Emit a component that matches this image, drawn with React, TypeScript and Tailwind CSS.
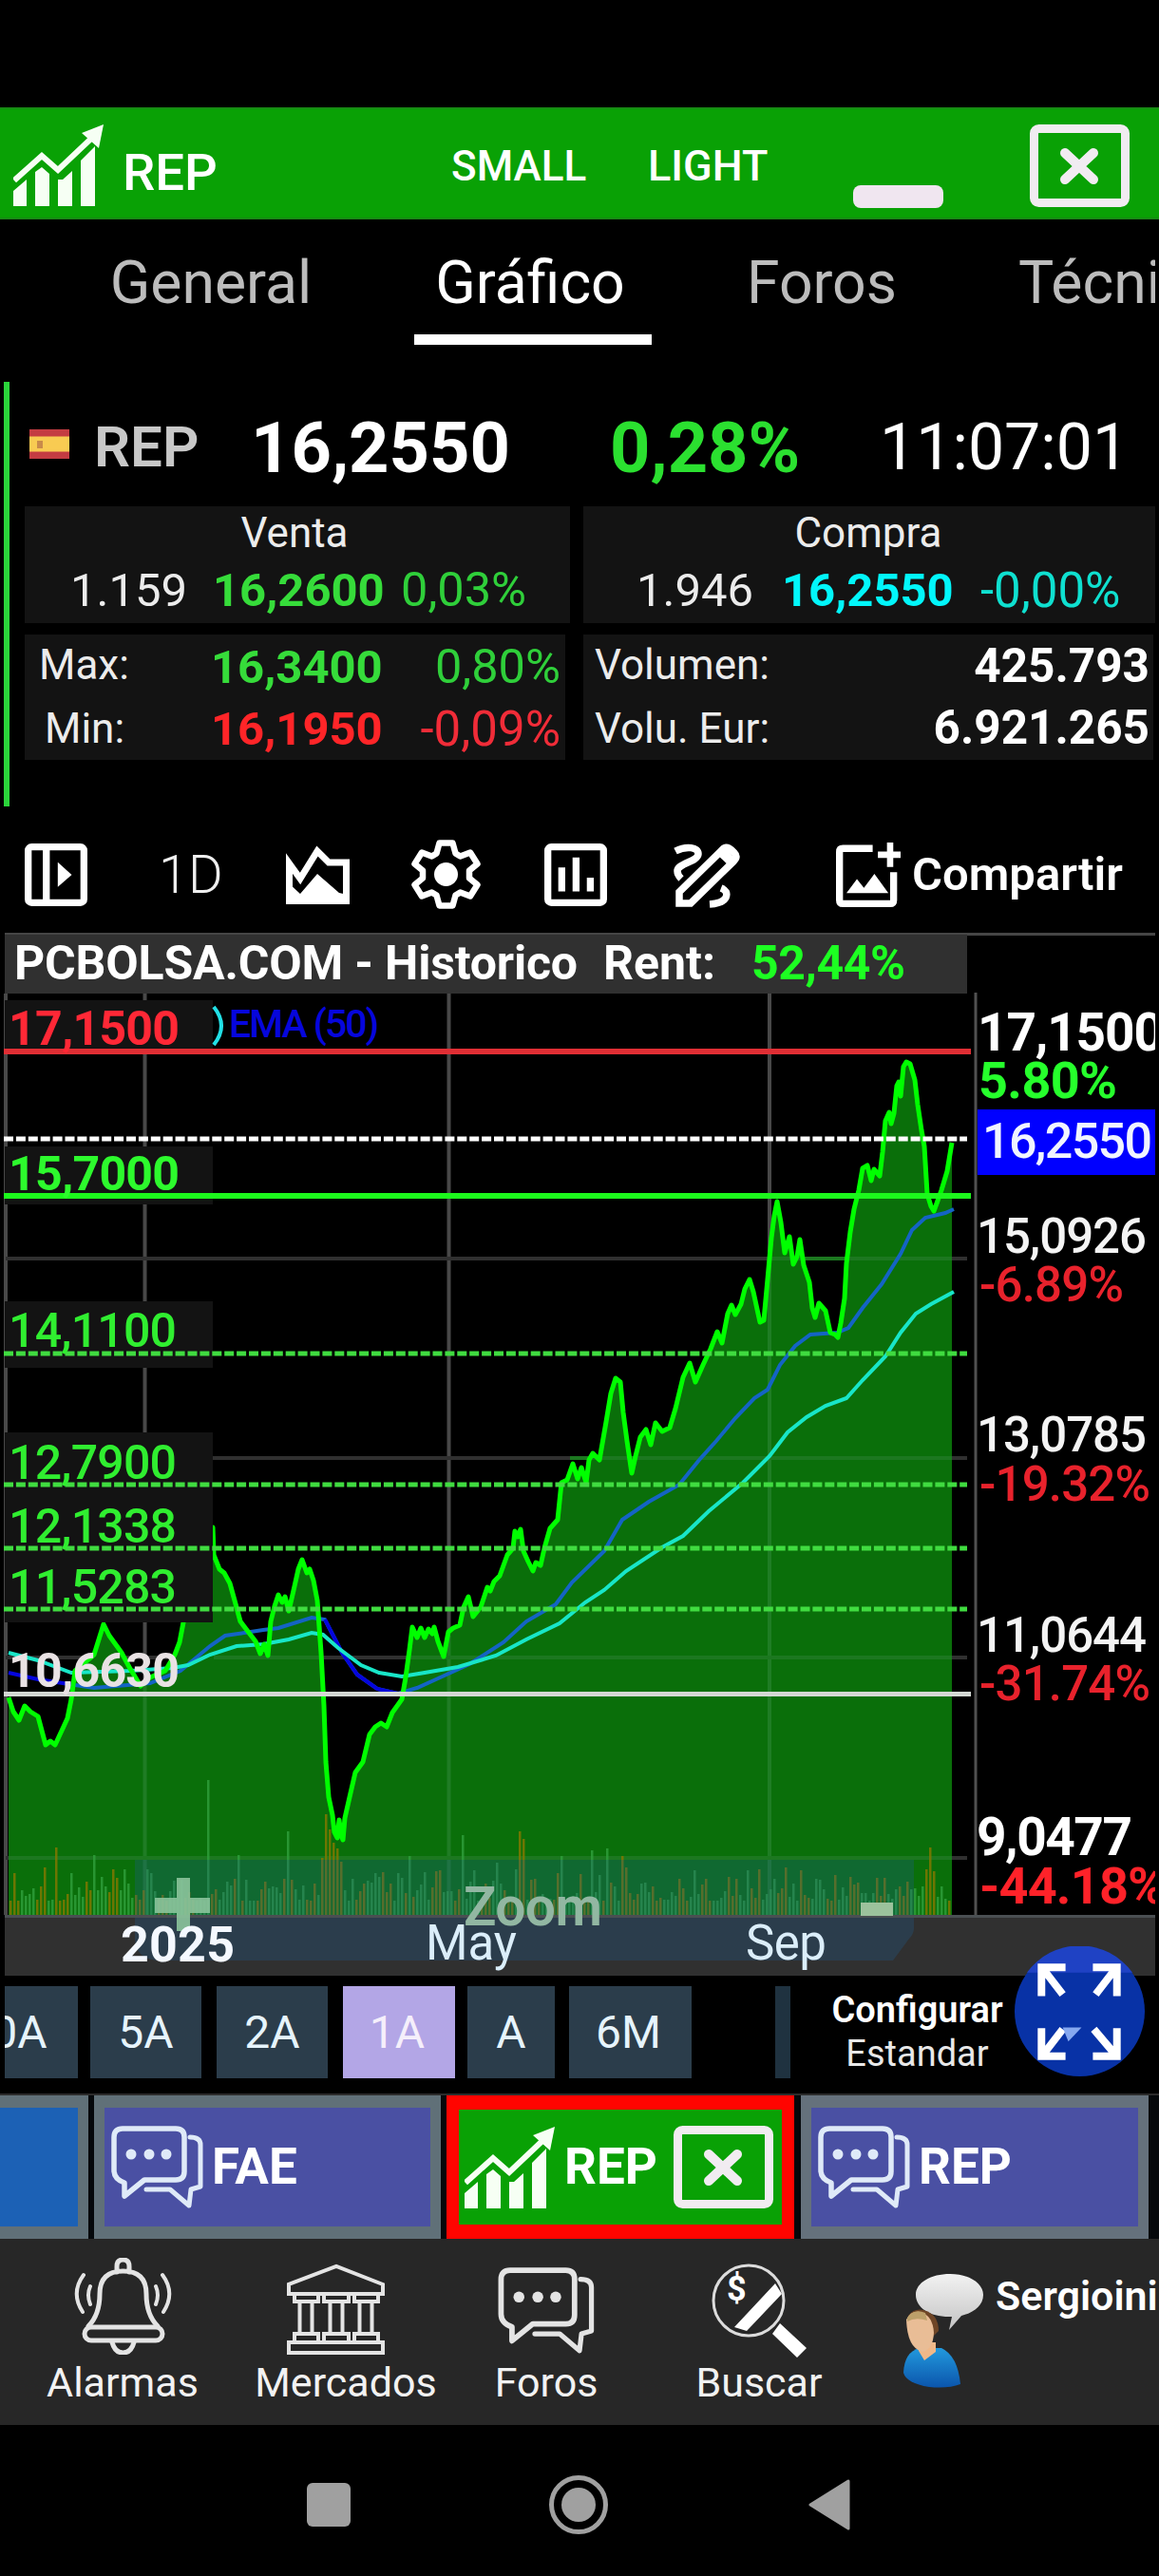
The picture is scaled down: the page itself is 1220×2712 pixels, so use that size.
import type { ReactNode } from "react";

// Chart coordinates: x in px, y measured from the top of the screen
const PRICE =
  "9,1787 14,1802 20,1811 26,1796 32,1802 40,1807 44,1822 48,1837 53,1833 58,1837 65,1822 71,1809 75,1789 79,1759 99,1742 104,1726 109,1710 115,1722 123,1733 128,1740 136,1755 148,1775 158,1766 174,1759 184,1742 189,1729 193,1708 205,1660 215,1630 224,1608 225,1637 231,1652 236,1656 242,1667 247,1685 253,1707 259,1715 269,1728 274,1741 278,1731 282,1743 285,1707 289,1691 293,1679 297,1687 300,1681 304,1696 310,1670 314,1652 318,1642 323,1656 326,1652 330,1664 334,1685 338,1740 341,1796 343,1855 346,1892 350,1911 352,1929 355,1935 357,1916 359,1932 361,1937 363,1914 368,1892 374,1866 382,1855 389,1826 395,1818 401,1814 407,1818 413,1803 423,1789 427,1766 431,1737 434,1713 439,1724 443,1714 447,1724 451,1715 455,1720 457,1713 461,1728 467,1744 472,1718 477,1714 484,1711 488,1692 493,1681 498,1702 506,1692 513,1671 516,1675 520,1665 526,1659 534,1637 540,1630 542,1612 545,1618 548,1610 551,1633 556,1644 561,1654 564,1645 569,1648 573,1630 579,1609 587,1600 591,1561 597,1558 603,1541 608,1557 612,1545 617,1561 620,1537 624,1530 631,1537 638,1497 643,1467 648,1451 653,1455 656,1487 660,1517 665,1551 669,1533 674,1513 680,1505 685,1521 690,1498 697,1507 705,1503 711,1483 719,1450 726,1435 732,1455 740,1437 748,1420 755,1402 760,1414 766,1383 770,1374 774,1384 780,1373 784,1357 789,1347 793,1360 798,1383 800,1392 804,1390 808,1347 812,1303 815,1280 818,1265 822,1287 826,1319 831,1302 835,1331 839,1323 842,1305 846,1332 852,1350 855,1377 858,1387 862,1372 869,1380 874,1403 879,1405 882,1408 885,1393 889,1367 891,1330 895,1297 899,1273 904,1253 908,1230 913,1227 917,1243 920,1231 926,1238 929,1213 932,1180 936,1171 938,1183 941,1172 944,1143 946,1139 948,1154 951,1123 954,1118 958,1120 963,1137 966,1163 970,1190 973,1207 976,1257 980,1270 983,1275 986,1267 991,1253 997,1233 1002,1203";

const EMA_50 =
  "79,1774 99,1777 158,1772 190,1759 221,1733 237,1722 277,1716 293,1714 328,1703 342,1705 360,1740 376,1763 397,1778 419,1783 439,1777 459,1768 494,1752 530,1729 554,1707 585,1689 602,1666 636,1633 655,1600 683,1581 715,1563 736,1537 754,1517 774,1493 794,1472 808,1463 821,1437 837,1417 853,1405 881,1403 893,1398 908,1377 928,1352 948,1320 960,1295 974,1282 995,1277 1004,1273";

const EMA_200 =
  "9,1740 40,1748 75,1761 138,1759 182,1756 198,1753 221,1742 249,1733 277,1731 304,1726 328,1719 340,1721 356,1735 380,1753 399,1761 423,1765 447,1761 482,1755 522,1743 554,1726 589,1709 616,1687 636,1674 659,1654 697,1629 719,1617 746,1591 782,1561 810,1533 829,1508 849,1492 869,1480 891,1472 908,1453 932,1428 948,1403 964,1383 980,1373 1004,1360";

const SPIKES: Record<number, number> = {
  46: 50, 58: 71, 98: 63, 118: 48, 218: 142, 250: 63, 302: 88, 338: 60, 342: 106, 346: 90, 350: 76, 354: 70,
  358: 56, 430: 62, 486: 84, 522: 55, 546: 88, 550: 80, 590: 62, 622: 68, 638: 70, 654: 62, 658: 50, 798: 48,
  826: 50, 894: 40, 974: 48, 978: 71, 982: 46,
};

// spikes that closed up are drawn green
const UP_SPIKES = [98, 218, 250, 302, 430, 486, 522, 590, 622, 638];

const VOLUMES = Array.from({ length: 248 }, (_, i) => {
  const x = 10 + i * 4;
  const noise = Math.abs(Math.sin(i * 12.9898) * 43758.5453) % 1;
  const down = SPIKES[x] ? !UP_SPIKES.includes(x) : (i * 7919) % 13 < 6;
  return { x, h: SPIKES[x] ?? 15 + Math.round(noise * noise * 34), down };
});

const LEVELS = [
  { label: "14,1100", y: 1425, base: 1418 },
  { label: "12,7900", y: 1563, base: 1557 },
  { label: "12,1338", y: 1630, base: 1624 },
  { label: "11,5283", y: 1694, base: 1688 },
];

const AXIS = [
  { label: "15,0926", y: 1319, pct: "-6.89%", pctY: 1370, w: 149 },
  { label: "13,0785", y: 1528, pct: "-19.32%", pctY: 1580, w: 177 },
  { label: "11,0644", y: 1739, pct: "-31.74%", pctY: 1790, w: 177 },
];

function ChartIcon({ className = "" }: { className?: string }) {
  return (
    <svg viewBox="0 0 96 86" className={`h-[86px] w-[96px] shrink-0 ${className}`} fill="#f6fff4">
      <path d="M0 70 14 58V86H0ZM23 50 30 45 38 52V86H23ZM47 58 52 58 62 49V86H47ZM71 38 86 23V86H71Z" />
      <path d="M1 59 30 33 47 48 85 12" fill="none" stroke="#f6fff4" strokeWidth="6" />
      <path d="M95 0 90 25 72 9Z" />
    </svg>
  );
}

function CloseIcon() {
  return (
    <svg viewBox="0 0 105 87" className="h-[87px] w-[105px] shrink-0" fill="none" stroke="#f1ecf1">
      <rect x="4.500" y="4.500" width="96" height="78" rx="5" strokeWidth="9" />
      <path d="M37 30 67 58M67 30 37 58" strokeWidth="10" strokeLinecap="round" />
    </svg>
  );
}

function ChatIcon({ className = "", color = "#dfeaf8" }: { className?: string; color?: string }) {
  return (
    <svg viewBox="0 0 97 88" className={`shrink-0 ${className}`} fill="none" stroke={color} strokeWidth="5.500" strokeLinejoin="round" strokeLinecap="round">
      <path d="M12 3H68Q77 3 77 12V48Q77 57 68 57H35L14 74V60Q3 56 3 47V12Q3 3 12 3Z" />
      <path d="M83 12Q94 12 94 20V64L84 67 82 84 62 67H37" strokeWidth="5" />
      <g fill={color} stroke="none">
        <circle cx="21" cy="30" r="5.500" />
        <circle cx="40" cy="30" r="5.500" />
        <circle cx="58" cy="30" r="5.500" />
      </g>
    </svg>
  );
}

function Header() {
  return (
    <header className="flex h-[118px] shrink-0 items-center border-y-2 border-[#178a14] bg-[#09a105] pl-[14px] pt-1 font-medium text-white">
      <ChartIcon />
      <span className="mt-[14px] ml-[19px] w-[346px] text-[54.500px] leading-none">REP</span>
      <span className="mt-[2px] w-[207px] text-[44px] leading-none">SMALL</span>
      <span className="w-[216px] text-[45px] leading-none">LIGHT</span>
      <span className="mt-[66px] h-[24px] w-[95px] shrink-0 rounded-[8px] bg-[#f0e6f0]" />
      <span className="ml-[91px]">
        <CloseIcon />
      </span>
    </header>
  );
}

function SectionTabs() {
  return (
    <nav className="flex h-[132px] w-[1216px] shrink-0 overflow-hidden text-[62.500px] text-[#bcbcbc]">
      <span className="ml-[86px] flex w-[272px] shrink-0 items-center justify-center pt-px">General</span>
      <span className="ml-[78px] flex w-[250px] shrink-0 items-center justify-center border-b-[11px] border-white pt-[12px] pr-[6px] text-white">Gráfico</span>
      <span className="ml-[54px] flex w-[250px] shrink-0 items-center justify-center pt-px">Foros</span>
      <span className="ml-[82px] flex shrink-0 items-center pt-px">Técnico</span>
    </nav>
  );
}

function Panel({ className, children }: { className: string; children: ReactNode }) {
  return <div className={`flex shrink-0 flex-col bg-[#131313] pt-[2px] text-[#ececec] ${className}`}>{children}</div>;
}

function Quote() {
  return (
    <section className="mt-[39px] flex h-[447px] shrink-0 pl-[4px]">
      <div className="w-[6px] shrink-0 bg-[#2bd43b]" />
      <div className="ml-[16px] flex flex-col">
        <div className="flex h-[131px] items-center leading-none">
          <svg viewBox="0 0 42 31" className="ml-[5px] h-[31px] w-[42px]">
            <rect width="42" height="31" fill="#c43c42" />
            <rect y="7.500" width="42" height="16" fill="#f8cb52" />
            <rect x="8" y="12" width="6" height="8" fill="#c98a4a" />
          </svg>
          <span className="mt-[6px] ml-[26px] w-[165px] text-[60px] font-semibold text-[#c8c8c8]">REP</span>
          <span className="mt-[8px] w-[378px] text-[74px] font-bold text-white">16,2550</span>
          <span className="mt-[8px] w-[284px] text-[74px] font-bold text-[#2be030]">0,28%</span>
          <span className="mt-[7px] text-[68px] text-white">11:07:01</span>
        </div>

        <div className="flex gap-[14px] leading-none">
          <Panel className="h-[123px] w-[574px]">
            <div className="flex h-[52px] items-center justify-center pr-[6px] text-[44px]">Venta</div>
            <div className="flex h-[71px] items-center pl-[48px] text-[49px]">
              <span className="w-[150px]">1.159</span>
              <span className="w-[198px] font-bold text-[#36dc3a]">16,2600</span>
              <span className="text-[50.500px] text-[#2fcf3a]">0,03%</span>
            </div>
          </Panel>
          <Panel className="h-[123px] w-[602px]">
            <div className="flex h-[52px] items-center justify-center pr-[2px] text-[44px]">Compra</div>
            <div className="flex h-[71px] items-center pl-[56px] text-[49px]">
              <span className="w-[153px]">1.946</span>
              <span className="w-[209px] font-bold text-[#02f6fa]">16,2550</span>
              <span className="text-[51px] text-[#0fe0d0]">-0,00%</span>
            </div>
          </Panel>
        </div>

        <div className="mt-[12px] flex gap-[19px] leading-none">
          <Panel className="h-[132px] w-[569px] text-[49px]">
            <div className="flex h-[65px] items-center pl-[15px]">
              <span className="mb-[4px] w-[181px] text-[44px]">Max:</span>
              <span className="w-[175px] font-bold text-[#36dc3a]">16,3400</span>
              <span className="flex-1 pr-[5px] text-right text-[50.500px] text-[#2fcf3a]">0,80%</span>
            </div>
            <div className="flex h-[67px] items-center pl-[21px]">
              <span className="w-[175px] text-[44px]">Min:</span>
              <span className="w-[175px] font-bold text-[#ff2528]">16,1950</span>
              <span className="flex-1 pr-[5px] text-right text-[51px] text-[#f02c38]">-0,09%</span>
            </div>
          </Panel>
          <Panel className="h-[132px] w-[600px] pr-[4px] pl-[12px] text-[44px]">
            <div className="flex h-[65px] items-center justify-between">
              <span className="mb-[4px]">Volumen:</span>
              <span className="text-[49.500px] font-bold text-white">425.793</span>
            </div>
            <div className="flex h-[67px] items-center justify-between">
              <span>Volu. Eur:</span>
              <span className="text-[49.500px] font-bold text-white">6.921.265</span>
            </div>
          </Panel>
        </div>
      </div>
    </section>
  );
}

function Toolbar() {
  return (
    <div className="flex h-[133px] shrink-0 items-center pt-[10px] pl-[26px] leading-none text-white">
      <svg viewBox="3 3 18 18" className="size-[66px]" fill="none" stroke="currentColor" strokeWidth="2">
        <rect x="4" y="4" width="16" height="16" rx="1" />
        <path d="M9.200 4V20" />
        <path d="M12.500 8.400 16.500 12 12.500 15.500Z" fill="currentColor" stroke="none" />
      </svg>
      <span className="ml-[75px] w-[134px] text-[56px] font-light text-[#f0f0f0]">1D</span>
      <svg viewBox="0 0 67 63" className="h-[63px] w-[67px]" fill="none" stroke="currentColor" strokeWidth="7">
        <path d="M3.500 60V20L15 36 33 7 45 19H63.500V60Z" />
        <path d="M2 40 15 52 33 31 56 51 65 53V62H2Z" fill="currentColor" stroke="none" />
      </svg>
      <svg viewBox="0 0 73 73" className="ml-[65px] size-[73px]" fill="none" stroke="currentColor" strokeWidth="6.500" strokeLinejoin="round">
        <path d="M29.500 3.500H43.500L46.500 14.500 51.500 17.500 62 13.500 69.500 25.500 61 32.500V40.500L69.500 47.500 62 59.500 51.500 55.500 46.500 58.500 43.500 69.500H29.500L26.500 58.500 21.500 55.500 11 59.500 3.500 47.500 12 40.500V32.500L3.500 25.500 11 13.500 21.500 17.500 26.500 14.500Z" />
        <circle cx="36.500" cy="36.500" r="12.500" fill="currentColor" stroke="none" />
      </svg>
      <svg viewBox="3 3 18 18" className="ml-[67px] size-[66px]" fill="none" stroke="currentColor" strokeWidth="2">
        <rect x="4" y="4" width="16" height="16" rx="1" />
        <path d="M8 9.900V16.800M12.100 7V16.800M16.200 12.800V16.800" />
      </svg>
      <svg viewBox="0 0 70 72" className="ml-[70px] h-[72px] w-[70px]" fill="none" stroke="currentColor" strokeWidth="7.500">
        <path d="M2 11C14 5 26 7 26 14C26 22 4 24 4 32Q4 36 8 40" />
        <path d="M6 66V54L50 11Q55 4 61 10L64 13Q68 17 63 22L18 66Z" />
        <path d="M45 14 60 28 65 20 55 7Z" fill="currentColor" stroke="none" />
        <path d="M50 50Q58 53 55 60Q52 66 38 67" />
      </svg>
      <svg viewBox="3 2.500 18.500 18.500" className="ml-[101px] size-[68px]" fill="none" stroke="currentColor" strokeWidth="2">
        <path d="M13.500 4.200H5Q4 4.200 4 5.200V19Q4 20 5 20H18.500Q19.500 20 19.500 19V11" />
        <path d="M18.500 2.500V9.500M15 6H22" strokeWidth="1.800" />
        <path d="M6 17 9 13 11 15.500 14 11.500 18 17Z" fill="currentColor" stroke="none" />
      </svg>
      <span className="ml-[12px] text-[49px] font-semibold">Compartir</span>
    </div>
  );
}

function Chart() {
  return (
    <svg viewBox="0 982 1220 1098" className="h-[1098px] w-[1220px] shrink-0" fontFamily="Roboto, sans-serif">
      {/* title strip */}
      <rect x="5" y="982" width="1211" height="3" fill="#464646" />
      <rect x="5" y="984" width="1013" height="62" fill="#303030" />
      <g fontWeight="700" fontSize="50">
        <text x="15" y="1031" textLength="593" fill="#fff">PCBOLSA.COM - Historico</text>
        <text x="635" y="1031" textLength="118" fill="#fff">Rent:</text>
        <text x="791" y="1031" textLength="162" fill="#1dff22">52,44%</text>
      </g>

      {/* grid */}
      <path d="M6 1046V2016M152.500 1046V2016M472.500 1046V2016M810 1046V2016" stroke="#484848" strokeWidth="4" />
      <path d="M6 1325H1018M6 1535H1018M6 1745H1018M6 1956H1018" stroke="#303030" strokeWidth="4" />
      <path d="M1027 1045V2016" stroke="#505050" strokeWidth="3" />

      <polygon points={`9,2016 ${PRICE} 1002,2016`} fill="#0a6f0a" />
      <path d="M152.500 1775V2016M472.500 1722V2016M810 1320V2016" stroke="#1f7d24" strokeWidth="4" />
      <path d="M225 1745H338M428 1745H1002M9 1956H1002M600 1535H1002M810 1325H1002" stroke="#1c7820" strokeWidth="4" />
      <polyline points={EMA_50} fill="none" stroke="#1464c4" strokeWidth="4" />
      <path d="M9 1761 40 1768 79 1774M342 1705 360 1740 376 1763 397 1778 419 1783" fill="none" stroke="#0505dc" strokeWidth="4" />
      <polyline points={EMA_200} fill="none" stroke="#18e6c8" strokeWidth="4" />
      <polyline points={PRICE} fill="none" stroke="#00ff00" strokeWidth="5" strokeLinejoin="round" />

      {VOLUMES.map(({ x, h, down }) => (
        <rect key={x} x={x} y={2016 - h} width="2.500" height={h} fill={down ? "#867800" : "#2fa03c"} opacity="0.8" />
      ))}

      {/* price level tags */}
      <path d="M5 1053H224V1107H5ZM5 1207H224V1268H5ZM5 1370H224V1440H5ZM5 1508H224V1708H5Z" fill="#131313" />
      <path d="M4 1107H1022" stroke="#e02e34" strokeWidth="6" />
      <path d="M4 1199H1018" stroke="#fff" strokeWidth="5" strokeDasharray="10 2.900" />
      <path d="M4 1259H1022" stroke="#1cf81c" strokeWidth="6" />
      {LEVELS.map(({ label, y, base }) => (
        <g key={label}>
          <path d={`M4 ${y}H1018`} stroke="#40dc40" strokeWidth="5" strokeDasharray="10 2.900" />
          <text x="9" y={base} fontSize="50" fontWeight="500" textLength="177" fill="#30ee30">{label}</text>
        </g>
      ))}
      <path d="M4 1783.500H1022" stroke="#d4d8d4" strokeWidth="5" />
      <g fontSize="50" fontWeight="700">
        <text x="9" y="1100" textLength="180" fill="#ff2836">17,1500</text>
        <text x="9" y="1253" textLength="180" fill="#2dfa2d">15,7000</text>
        <text x="9" y="1776" textLength="180" fill="#e9e2e4">10,6630</text>
      </g>
      <path d="M225 1060Q241 1080 225 1100" fill="none" stroke="#22e0e6" strokeWidth="4" />
      <text x="241" y="1092" fontSize="41" fontWeight="500" textLength="158" fill="#0606dc">EMA (50)</text>

      {/* zoom control */}
      <path d="M142 1958H962V2030Q962 2036 957 2041L940 2064H170Q142 2064 142 2040Z" fill="#215d8f" opacity="0.3" />
      <rect x="5" y="2016" width="1211" height="64" fill="#303030" />
      <path d="M142 2016H962V2030Q962 2036 957 2041L940 2064H170Q142 2064 142 2040Z" fill="#215d8f" opacity="0.3" />
      <rect x="5" y="2016" width="1211" height="3" fill="#4a4f52" />
      <path d="M186 1977H200V1998H221V2014H200V2033H186V2014H163V1998H186Z" fill="#8cc49c" opacity="0.9" />
      <path d="M906 2003H940V2017H906Z" fill="#9cc29c" />
      <text x="488" y="2027" fontSize="57" fontWeight="600" textLength="146" fill="#92b7a2">Zoom</text>
      <text x="127" y="2065" fontSize="52" fontWeight="700" textLength="120" fill="#f4f8ff">2025</text>
      <g fontSize="51" fill="#dbeefa">
        <text x="448" y="2063" textLength="96">May</text>
        <text x="785" y="2063" textLength="85">Sep</text>
      </g>

      {/* price axis */}
      <g fontSize="55" fontWeight="700">
        <text x="1029" y="1106" textLength="196" fill="#fff">17,1500</text>
        <text x="1030" y="1156" fontSize="54" textLength="146" fill="#26ff2c">5.80%</text>
        <text x="1028" y="1953" textLength="164" fill="#fff">9,0477</text>
        <text x="1031" y="2004" fontSize="54" textLength="196" fill="#ff2229">-44.18%</text>
      </g>
      <rect x="1029" y="1168" width="187" height="69" fill="#0000ff" />
      <text x="1034" y="1219" fontSize="52" fontWeight="500" textLength="179" fill="#f0f4ff">16,2550</text>
      {AXIS.map(({ label, y, pct, pctY, w }) => (
        <g key={label} fontSize="51">
          <text x="1028" y={y} fontWeight="500" textLength="179" fill="#f4f4f4">{label}</text>
          <text x="1031" y={pctY} fontWeight="500" textLength={w + 3} fill="#e8222c">{pct}</text>
        </g>
      ))}
      <rect x="1216" y="982" width="4" height="1098" fill="#000" />
    </svg>
  );
}

function RangeButton({ className, children }: { className: string; children?: ReactNode }) {
  return <span className={`flex h-[97px] shrink-0 items-center justify-center overflow-hidden text-[48px] ${className}`}>{children}</span>;
}

function Ranges() {
  return (
    <div className="relative flex h-[124px] shrink-0 pt-[11px] pl-[5px] leading-none text-[#e6f4fc]">
      <RangeButton className="w-[77px] bg-[#2b3d4b] pr-[73px]">10A</RangeButton>
      <RangeButton className="ml-[13px] w-[117px] bg-[#2b3d4b]">5A</RangeButton>
      <RangeButton className="ml-[16px] w-[117px] bg-[#2b3d4b]">2A</RangeButton>
      <RangeButton className="ml-[16px] w-[118px] bg-[#b3a6e6] pr-[4px] text-[#f5effb]">1A</RangeButton>
      <RangeButton className="ml-[13px] w-[92px] bg-[#2b3d4b]">A</RangeButton>
      <RangeButton className="ml-[15px] w-[129px] bg-[#2b3d4b] pr-[4px]">6M</RangeButton>
      <RangeButton className="ml-[88px] w-[16px] bg-[#1f3240]" />
      <div className="ml-[36px] flex w-[195px] flex-col items-center pt-[2px] text-[38px] text-white">
        <span className="flex h-[46px] items-center font-semibold">Configurar</span>
        <span className="flex h-[46px] items-center text-[#e8e8e8]">Estandar</span>
      </div>
      {/* floating fullscreen button */}
      <svg viewBox="0 0 138 138" className="absolute top-[-31px] left-[1068px] size-[137px]" fill="none" stroke="#fff" strokeWidth="8">
        <circle cx="69" cy="69" r="69" fill="#0832a6" stroke="none" />
        <path d="M13 28A69 69 0 0 1 125 28Z" fill="#1f42c4" stroke="none" />
        <path d="M54 22.500H28.500V53M31 25 51 51M83 22.500H108.500V53M106 25 86 51" />
        <path d="M54 116.500H28.500V87M31 114 51 88M83 116.500H108.500V87M106 114 84 88" />
        <path d="M51 86H71L57 101Z" fill="#86a8f0" stroke="none" />
      </svg>
    </div>
  );
}

function OpenTabs() {
  return (
    <div className="flex h-[153px] shrink-0 overflow-hidden border-t-2 border-[#2c2c2c] bg-[#05080b] text-[53px] leading-none font-bold text-white">
      <div className="h-[151px] w-[93px] shrink-0 border-y-[13px] border-r-[11px] border-[#607078] bg-[#1c61b5]" />
      <div className="ml-[6px] flex w-[365px] shrink-0 items-center border-x-[11px] border-y-[13px] border-[#607078] bg-[#4a50a3] pl-[7px]">
        <ChatIcon className="h-[88px] w-[97px]" />
        <span className="ml-[9px]">FAE</span>
      </div>
      <div className="ml-[6px] flex w-[366px] shrink-0 items-center border-x-[13px] border-y-[15px] border-[#ff0400] bg-[#09a105] pl-[6px]">
        <ChartIcon />
        <span className="ml-[9px] w-[115px]">REP</span>
        <CloseIcon />
      </div>
      <div className="ml-[7px] flex w-[366px] shrink-0 items-center border-x-[11px] border-y-[13px] border-[#65717c] bg-[#4a50a3] pl-[7px]">
        <ChatIcon className="h-[88px] w-[97px]" />
        <span className="ml-[9px]">REP</span>
      </div>
    </div>
  );
}

function NavItem({ label, className, children }: { label: string; className: string; children: ReactNode }) {
  return (
    <div className={`flex shrink-0 flex-col items-center pt-[20px] ${className}`}>
      {children}
      <span className="flex h-[58px] items-center text-[43px] leading-none">{label}</span>
    </div>
  );
}

function BottomNav() {
  return (
    <nav className="flex h-[196px] shrink-0 overflow-hidden bg-[#272727] text-[#f2f2f2]">
      <NavItem label="Alarmas" className="w-[258px]">
        <svg viewBox="0 0 103 102" className="h-[102px] w-[103px]" fill="none" stroke="#e4e4e4" strokeWidth="5" strokeLinecap="round">
          <path d="M45 15V9Q45 2 51.500 2Q58 2 58 9V15M15 72Q27 60 27 38Q27 14 51.500 14Q76 14 76 38Q76 60 88 72" />
          <rect x="11" y="73" width="82" height="14" rx="7" />
          <path d="M40 89Q43 100 51.500 100Q60 100 63 89" />
          <path d="M17 30Q13 39 17 49M86 30Q90 39 86 49M10 18Q-4 37 9 57M93 18Q107 37 94 57" strokeWidth="4" />
        </svg>
      </NavItem>
      <NavItem label="Mercados" className="w-[212px]">
        <svg viewBox="0 0 103 102" className="mr-[22px] h-[102px] w-[103px]" fill="none" stroke="#e4e4e4" strokeWidth="4">
          <path d="M2 38V28L52 9 101 28V38ZM2 89H101V100H2Z" />
          <path d="M8 38H33V46H8ZM39 38H65V46H39ZM71 38H96V46H71ZM8 80H33V89H8ZM39 80H65V89H39ZM71 80H96V89H71Z" />
          <path d="M13.500 46V80M26.500 46V80M45.500 46V80M58.500 46V80M76.500 46V80M89.500 46V80" />
        </svg>
      </NavItem>
      <NavItem label="Foros" className="w-[210px]">
        <ChatIcon className="mt-[10px] h-[92px] w-[102px]" color="#e4e4e4" />
      </NavItem>
      <NavItem label="Buscar" className="w-[238px]">
        <svg viewBox="0 0 102 102" className="h-[102px] w-[102px] overflow-visible" fill="#fff">
          <circle cx="40" cy="45" r="37" fill="none" stroke="#dcdcdc" strokeWidth="3" />
          <path d="M25 73 38 77 75 38 68 27ZM65 80 73 69 101 95 91 105Z" />
          <text x="17" y="45" fontSize="36" fontWeight="700" fontFamily="Roboto, sans-serif">$</text>
        </svg>
      </NavItem>
      <svg viewBox="0 0 87 121" className="mt-[37px] ml-[30px] h-[121px] w-[87px] shrink-0">
        <defs>
          <linearGradient id="bubble" x2="0" y2="1">
            <stop stopColor="#f2f2f2" />
            <stop offset="1" stopColor="#c4c4c4" />
          </linearGradient>
          <linearGradient id="shirt" x2="0" y2="1">
            <stop stopColor="#2299dd" />
            <stop offset="1" stopColor="#0b55ac" />
          </linearGradient>
        </defs>
        <path d="M52 0C72 0 87 10 87 22C87 34 76 41 64 44L51 59 54 45C32 46 16 36 16 22C16 9 32 0 52 0Z" fill="url(#bubble)" />
        <path d="M3 104Q4 82 20 78H43Q60 86 63 116Q50 121 30 119Q6 115 3 104Z" fill="url(#shirt)" />
        <path d="M19 72H37V82L25 91 19 81Z" fill="#f0b888" />
        <path d="M8 44Q14 36 24 38Q40 42 40 60L34 66Z" fill="#6e4526" />
        <path d="M6 48Q11 38 21 40Q34 44 35 62Q34 80 23 82Q7 78 6 48Z" fill="#e9bd96" />
        <path d="M7 46Q14 36 26 41L28 49Q16 45 7 50Z" fill="#bda06a" />
      </svg>
      <span className="mt-[38px] ml-[13px] text-[43px] leading-[44px] font-semibold text-white">Sergioini</span>
    </nav>
  );
}

function SystemBar() {
  return (
    <div className="flex h-[159px] shrink-0 items-center pt-[8px] pl-[323px]">
      <span className="size-[46px] rounded-[6px] bg-[#a0a0a0]" />
      <svg viewBox="0 0 64 64" className="ml-[208px] size-[64px]">
        <circle cx="32" cy="32" r="28.500" fill="none" stroke="#a0a0a0" strokeWidth="5" />
        <circle cx="32" cy="32" r="18" fill="#a0a0a0" />
      </svg>
      <svg viewBox="0 0 44 54" className="ml-[210px] h-[54px] w-[44px]" fill="#a0a0a0" stroke="#a0a0a0" strokeWidth="3" strokeLinejoin="round">
        <path d="M2 27 42 2V52Z" />
      </svg>
    </div>
  );
}

export default function App() {
  return (
    <div className="flex h-[2712px] w-[1220px] flex-col overflow-hidden bg-black pt-[113px] font-['Roboto',sans-serif]">
      <Header />
      <SectionTabs />
      <Quote />
      <Toolbar />
      <Chart />
      <Ranges />
      <OpenTabs />
      <BottomNav />
      <SystemBar />
    </div>
  );
}
